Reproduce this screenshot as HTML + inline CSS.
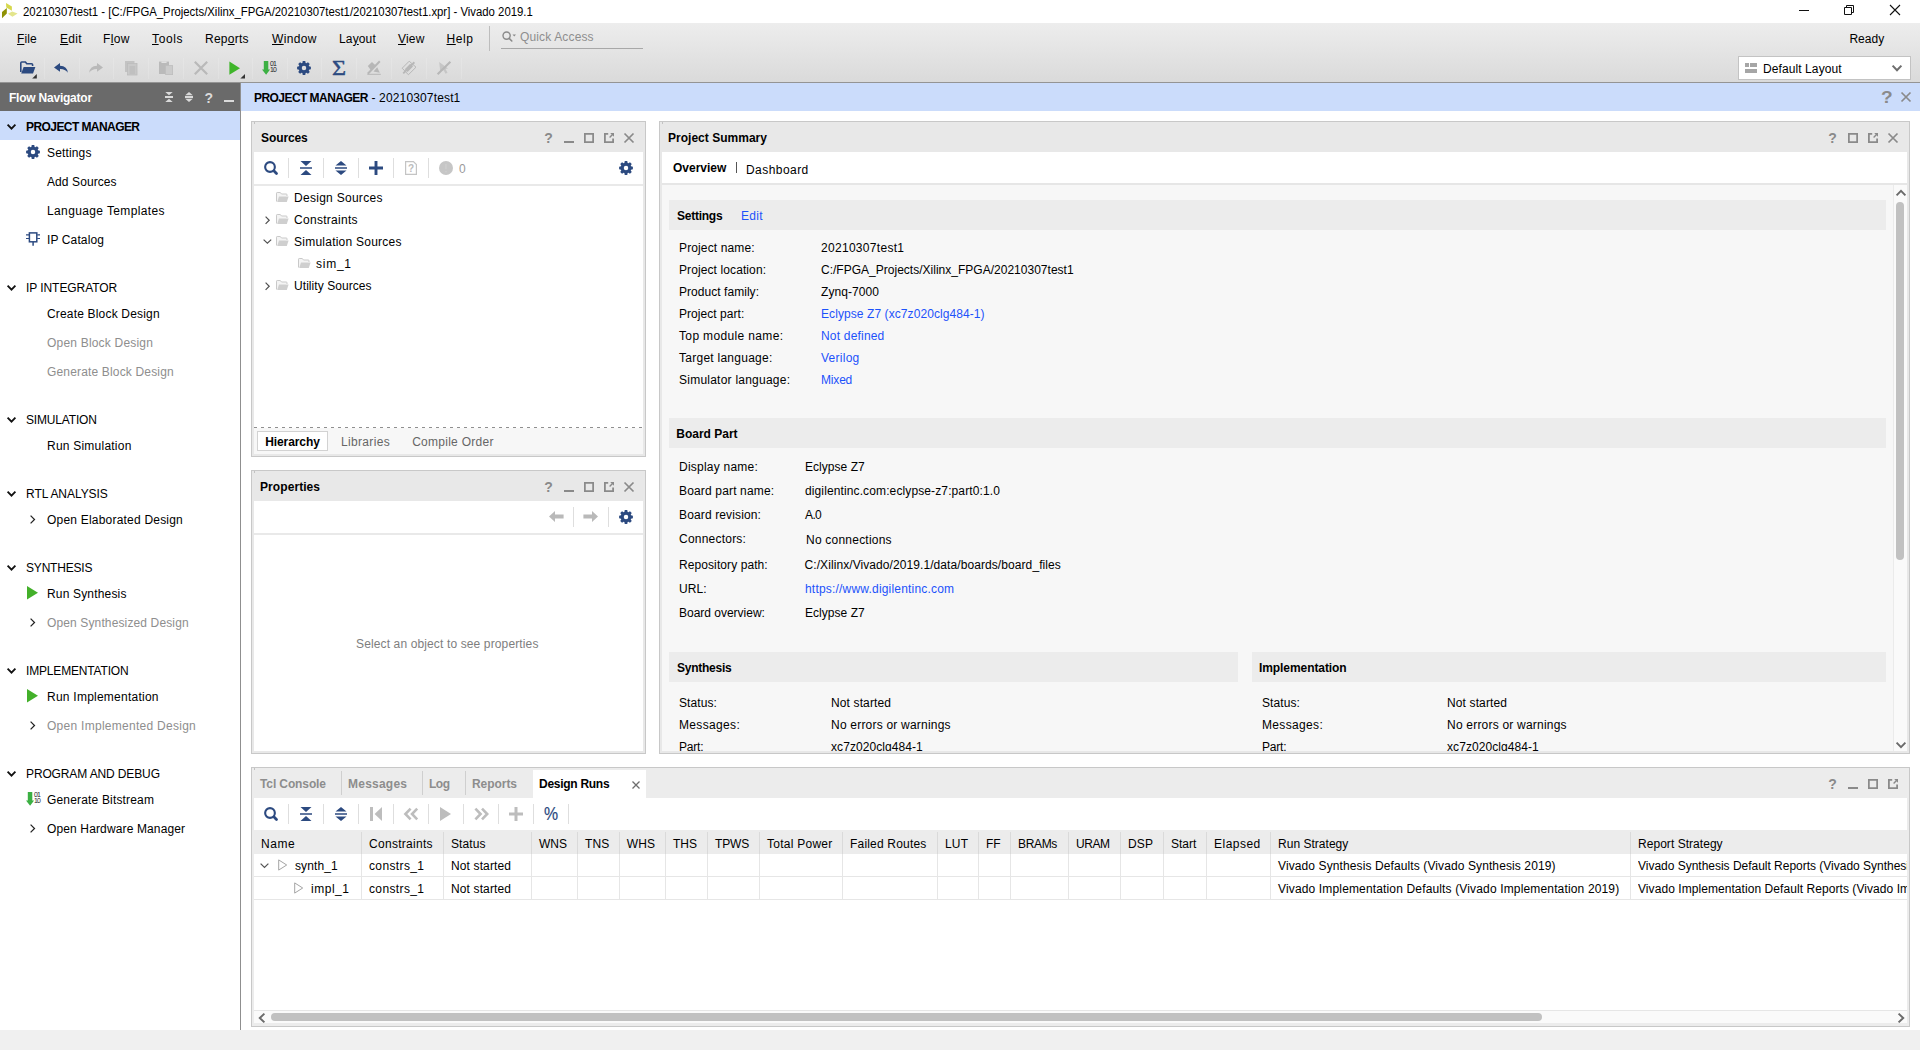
<!DOCTYPE html>
<html lang="en">
<head>
<meta charset="utf-8">
<title>20210307test1 - Vivado 2019.1</title>
<style>
*{box-sizing:border-box;margin:0;padding:0}
html,body{width:1920px;height:1050px;overflow:hidden;background:#fff}
body{font-family:"Liberation Sans",sans-serif;font-size:12px;color:#000;position:relative;line-height:14px}
.a{position:absolute}
.t{position:absolute;white-space:nowrap;height:14px;line-height:14px}
.b{font-weight:bold}
.g{color:#8c8c8c}
.l{color:#2a62d9}
svg{position:absolute;overflow:visible}
u{text-decoration:underline;text-underline-offset:1px}
/* title */
#title{left:0;top:0;width:1920px;height:23px;background:#fff}
#menubar{left:0;top:23px;width:1920px;height:59px;background:linear-gradient(#ededed,#dadada)}
#menuline{left:0;top:82px;width:1920px;height:1px;background:#949494}
/* nav */
#navhdr{left:0;top:83px;width:240px;height:28px;background:#6a6a6a}
#navsel{left:0;top:111px;width:240px;height:29px;background:#cbdcfb}
#navborder{left:240px;top:83px;width:1px;height:947px;background:#8f8f8f}
#status{left:0;top:1030px;width:1920px;height:20px;background:#f0f0f0}
#pmhdr{left:241px;top:83px;width:1679px;height:28px;background:#cbdcfb}
.panel{position:absolute;border:1px solid #c6c6c6;background:#e8e8e8}
.white{position:absolute;background:#fff}
.vsep{position:absolute;width:1px;background:#dcdcdc}
</style>
</head>
<body>
<!-- TITLE BAR -->
<div id="title" class="a"></div>
<!-- MENUBAR -->
<div id="menubar" class="a"></div>
<div id="menuline" class="a"></div>
<!-- NAV -->
<div id="navhdr" class="a"></div>
<div id="navsel" class="a"></div>
<div id="navborder" class="a"></div>
<div id="pmhdr" class="a"></div>
<div id="status" class="a"></div>

<!-- p1_top -->
<svg style="left:0px;top:0px" width="20" height="22" viewBox="0 0 20 22"><path d="M6 2.9L11.9 6.5V10.8L6.3 7.6Z" fill="#d6d84c"/><path d="M2 12L6.8 8V13.6L2 18.2Z" fill="#8f9205"/><path d="M8 13.8L12.2 11.4L17.6 13.6L12.4 16.7Z" fill="#e3e58c"/></svg>
<div class="t" style="left:23px;top:5px;color:#000;transform:scaleX(0.9462);transform-origin:0 0">20210307test1 - [C:/FPGA_Projects/Xilinx_FPGA/20210307test1/20210307test1.xpr] - Vivado 2019.1</div>
<div class="a" style="left:1799px;top:10px;width:10px;height:1px;background:#111"></div>
<svg style="left:1844px;top:5px" width="10" height="10" viewBox="0 0 10 10"><path d="M0.5 2.5H7.5V9.5H0.5Z" fill="none" stroke="#111" stroke-width="1"/><path d="M2.5 2.5V0.5H9.5V7.5H7.5" fill="none" stroke="#111" stroke-width="1"/></svg>
<svg style="left:1890px;top:5px" width="10" height="10" viewBox="0 0 10 10"><path d="M0 0L10 10M10 0L0 10" stroke="#111" stroke-width="1.1" fill="none"/></svg>
<div class="t" style="left:17px;top:32px;letter-spacing:0.085px"><u>F</u>ile</div>
<div class="t" style="left:60px;top:32px;letter-spacing:0.304px"><u>E</u>dit</div>
<div class="t" style="left:103px;top:32px;letter-spacing:0.385px">F<u>l</u>ow</div>
<div class="t" style="left:152px;top:32px;letter-spacing:0.646px"><u>T</u>ools</div>
<div class="t" style="left:205px;top:32px;letter-spacing:0.245px">Rep<u>o</u>rts</div>
<div class="t" style="left:272px;top:32px;letter-spacing:0.322px"><u>W</u>indow</div>
<div class="t" style="left:339px;top:32px;letter-spacing:0.134px">La<u>y</u>out</div>
<div class="t" style="left:398px;top:32px;letter-spacing:0.168px"><u>V</u>iew</div>
<div class="t" style="left:446.5px;top:32px;letter-spacing:0.604px"><u>H</u>elp</div>
<div class="a" style="left:489px;top:26px;width:1px;height:25px;background:#bdbdbd"></div>
<svg style="left:502px;top:31px" width="16" height="12" viewBox="0 0 16 12"><circle cx="4.6" cy="4.6" r="3.6" fill="none" stroke="#8a8a8a" stroke-width="1.4"/><path d="M7.2 7.4L9.8 10" stroke="#8a8a8a" stroke-width="1.6" stroke-linecap="round"/><path d="M10.5 3.6H14L12.25 5.6Z" fill="#8a8a8a"/></svg>
<div class="t" style="left:520px;top:30px;letter-spacing:0.143px;color:#8e8e8e">Quick Access</div>
<div class="a" style="left:501px;top:48px;width:142px;height:1px;background:#a8a8a8"></div>
<div class="t" style="left:1849.4px;top:32px;letter-spacing:0.053px">Ready</div>
<div class="a" style="left:44px;top:58px;width:1px;height:21px;background:rgba(255,255,255,0.16)"></div>
<div class="a" style="left:79px;top:58px;width:1px;height:21px;background:rgba(255,255,255,0.16)"></div>
<div class="a" style="left:113px;top:58px;width:1px;height:21px;background:rgba(255,255,255,0.16)"></div>
<div class="a" style="left:148px;top:58px;width:1px;height:21px;background:rgba(255,255,255,0.16)"></div>
<div class="a" style="left:183px;top:58px;width:1px;height:21px;background:rgba(255,255,255,0.16)"></div>
<div class="a" style="left:218px;top:58px;width:1px;height:21px;background:rgba(255,255,255,0.16)"></div>
<div class="a" style="left:252px;top:58px;width:1px;height:21px;background:rgba(255,255,255,0.16)"></div>
<div class="a" style="left:287px;top:58px;width:1px;height:21px;background:rgba(255,255,255,0.16)"></div>
<div class="a" style="left:321px;top:58px;width:1px;height:21px;background:rgba(255,255,255,0.16)"></div>
<div class="a" style="left:356px;top:58px;width:1px;height:21px;background:rgba(255,255,255,0.16)"></div>
<div class="a" style="left:391px;top:58px;width:1px;height:21px;background:rgba(255,255,255,0.16)"></div>
<div class="a" style="left:426px;top:58px;width:1px;height:21px;background:rgba(255,255,255,0.16)"></div>
<div class="a" style="left:461px;top:58px;width:1px;height:21px;background:rgba(255,255,255,0.16)"></div>
<svg style="left:20px;top:61px" width="17" height="16" viewBox="0 0 17 16"><path d="M0.8 11V2Q0.8 1 1.8 1H5.4L6.8 2.8H11.6Q12.6 2.8 12.6 3.8V5" fill="none" stroke="#2c4a80" stroke-width="1.6"/><path d="M1.2 12.4L3.6 6H15.4L13 12.4Z" fill="#2c4a80"/><path d="M16.8 13V17.6H12.2Z" fill="#333"/></svg>
<svg style="left:54px;top:63px" width="15" height="11" viewBox="0 0 15 11"><path d="M6 0L0 4.4L6 8.8V6.1Q11 5.9 13.8 9.8Q13.4 3 6 2.7Z" fill="#2c4a80"/></svg>
<svg style="left:88px;top:63px" width="15" height="11" viewBox="0 0 15 11"><path d="M9 0L15 4.4L9 8.8V6.1Q4 5.9 1.2 9.8Q1.6 3 9 2.7Z" fill="#b9b9b9"/></svg>
<svg style="left:125px;top:61px" width="12" height="14" viewBox="0 0 12 14"><rect x="0" y="0" width="9.5" height="11" fill="#c3c3c3"/><rect x="2.5" y="2.5" width="9.5" height="11.5" fill="#c9c9c9" stroke="#bcbcbc" stroke-width="0.8"/><path d="M4.4 6H10.2M4.4 8H10.2M4.4 10H10.2M4.4 12H10.2" stroke="#b4b4b4" stroke-width="0.8"/></svg>
<svg style="left:159px;top:61px" width="14" height="14" viewBox="0 0 14 14"><rect x="0" y="0.6" width="10" height="12.4" fill="#bababa"/><rect x="2.4" y="0.6" width="5.2" height="1.3" fill="#e6e6e6"/><rect x="6.6" y="4.6" width="7" height="9" fill="#cbcbcb" stroke="#bdbdbd" stroke-width="0.8"/></svg>
<svg style="left:194px;top:61px" width="14" height="14" viewBox="0 0 14 14"><path d="M0.8 0.8L13.2 13.2M13.2 0.8L0.8 13.2" stroke="#b9b9b9" stroke-width="2.2" fill="none"/></svg>
<svg style="left:229px;top:61px" width="17" height="18" viewBox="0 0 17 18"><path d="M0.4 0.6L11 7.2L0.4 13.8Z" fill="#3fb52a"/><path d="M16 13V17.6H11.4Z" fill="#333"/></svg>
<svg style="left:262px;top:61px" width="16" height="14" viewBox="0 0 16 14"><path d="M1.8 0H6.3V8.4H8.1L4.1 13.8L0 8.4H1.8Z" fill="#3cb043"/><text x="8" y="4.9" font-family="Liberation Sans,sans-serif" font-size="6.9" fill="#1c1c1c" letter-spacing="-0.75">01</text><text x="8" y="11.1" font-family="Liberation Sans,sans-serif" font-size="6.9" fill="#1c1c1c" letter-spacing="-0.75">10</text></svg>
<svg style="left:297px;top:61px" width="14" height="14" viewBox="-7 -7 14 14"><path d="M5.06 -1.64L6.89 -1.26L6.89 1.26L5.06 1.64L4.74 2.42L5.76 3.98L3.98 5.76L2.42 4.74L1.64 5.06L1.26 6.89L-1.26 6.89L-1.64 5.06L-2.42 4.74L-3.98 5.76L-5.76 3.98L-4.74 2.42L-5.06 1.64L-6.89 1.26L-6.89 -1.26L-5.06 -1.64L-4.74 -2.42L-5.76 -3.98L-3.98 -5.76L-2.42 -4.74L-1.64 -5.06L-1.26 -6.89L1.26 -6.89L1.64 -5.06L2.42 -4.74L3.98 -5.76L5.76 -3.98L4.74 -2.42ZM2.25 0A2.25 2.25 0 1 0 -2.25 0A2.25 2.25 0 1 0 2.25 0Z" fill="#2c4a80" fill-rule="evenodd"/></svg>
<div class="t" style="left:332px;top:56px;height:24px;line-height:24px;font-family:'Liberation Serif',serif;font-size:21.5px;color:#2c4a80;-webkit-text-stroke:0.45px #2c4a80;transform:scaleX(1.12);transform-origin:0 0">Σ</div>
<svg style="left:366px;top:60px" width="16" height="16" viewBox="0 0 16 16"><path d="M1.8 5.9L6 2L9.6 5.6L5 10.6Z" fill="#b7b7b7"/><path d="M13.8 1.2L1.8 13.7" stroke="#b7b7b7" stroke-width="2"/><path d="M11.2 7.2L13.8 12.7L7.5 11.6Z" fill="#b7b7b7"/><path d="M1.3 14.3H14.8" stroke="#b7b7b7" stroke-width="1"/></svg>
<svg style="left:401px;top:60px" width="16" height="16" viewBox="0 0 16 16"><path d="M1.2 8.2L8.2 1.2L15 7.2L7.4 14.75Z" fill="none" stroke="#b7b7b7" stroke-width="1"/><path d="M13.4 2.25L2.2 13.4" stroke="#b7b7b7" stroke-width="1.8"/><path d="M10.6 5.2L5.2 10.6" stroke="#b7b7b7" stroke-width="4"/></svg>
<svg style="left:436px;top:60px" width="16" height="16" viewBox="0 0 16 16"><path d="M3.2 2L12 8.5L9.6 9L11.5 12.7L9.5 13.7L7.6 10.2L4.2 11.6Z" fill="#c6c6c6"/><path d="M14.4 1.7L1.6 14.2" stroke="#b7b7b7" stroke-width="2.1"/></svg>
<div class="a" style="left:1738px;top:56px;width:173px;height:24px;background:#fff;border:1px solid #c3c3c3"></div>
<div class="a" style="left:1745px;top:63px;width:3.5px;height:4px;background:#a6a6a6"></div>
<div class="a" style="left:1750px;top:63px;width:7px;height:4px;background:#a6a6a6"></div>
<div class="a" style="left:1745px;top:69px;width:12px;height:4px;background:#a6a6a6"></div>
<div class="t" style="left:1763px;top:62px;letter-spacing:0.093px">Default Layout</div>
<svg style="left:1892.0px;top:65.0px" width="10" height="6" viewBox="0 0 10 6"><path d="M0.6 0.6L5.0 5.2L9.4 0.6" fill="none" stroke="#6e6e6e" stroke-width="2"/></svg>
<!-- p2_nav -->
<div class="t b" style="left:9px;top:91px;letter-spacing:-0.224px;color:#fff">Flow Navigator</div>
<svg style="left:165px;top:92px" width="8" height="10" viewBox="0 0 8 10"><path d="M0.3 0H7.7L4 3.2Z M0 4.1H8V5.9H0Z M4 6.8L7.7 10H0.3Z" fill="#dadada"/></svg>
<svg style="left:185px;top:92px" width="8" height="10" viewBox="0 0 8 10"><path d="M4 0L7.8 3.3H0.2Z M0 4.1H8V5.9H0Z M0.2 6.7H7.8L4 10Z" fill="#dadada"/></svg>
<div class="t b" style="left:204.5px;top:91px;color:#dadada;font-size:14px">?</div>
<div class="a" style="left:224px;top:100px;width:10px;height:2px;background:#dadada"></div>
<svg style="left:7.0px;top:123.75px" width="9" height="5.5" viewBox="0 0 9 5.5"><path d="M0.6 0.6L4.5 4.7L8.4 0.6" fill="none" stroke="#111" stroke-width="1.8"/></svg>
<div class="t b" style="left:26px;top:120px;letter-spacing:-0.573px">PROJECT MANAGER</div>
<svg style="left:26px;top:145px" width="14" height="14" viewBox="-7 -7 14 14"><path d="M5.06 -1.64L6.89 -1.26L6.89 1.26L5.06 1.64L4.74 2.42L5.76 3.98L3.98 5.76L2.42 4.74L1.64 5.06L1.26 6.89L-1.26 6.89L-1.64 5.06L-2.42 4.74L-3.98 5.76L-5.76 3.98L-4.74 2.42L-5.06 1.64L-6.89 1.26L-6.89 -1.26L-5.06 -1.64L-4.74 -2.42L-5.76 -3.98L-3.98 -5.76L-2.42 -4.74L-1.64 -5.06L-1.26 -6.89L1.26 -6.89L1.64 -5.06L2.42 -4.74L3.98 -5.76L5.76 -3.98L4.74 -2.42ZM2.25 0A2.25 2.25 0 1 0 -2.25 0A2.25 2.25 0 1 0 2.25 0Z" fill="#2c4a80" fill-rule="evenodd"/></svg>
<div class="t" style="left:47px;top:146px;letter-spacing:0.149px">Settings</div>
<div class="t" style="left:47px;top:175px;letter-spacing:0.088px">Add Sources</div>
<div class="t" style="left:47px;top:204px;letter-spacing:0.376px">Language Templates</div>
<svg style="left:26px;top:232px" width="14" height="14" viewBox="0 0 14 14"><rect x="3.4" y="0.9" width="7.4" height="8.9" fill="none" stroke="#2c4a80" stroke-width="1.5"/><path d="M0 2.9H3M0 6.5H3M11.2 2.9H14M11.2 6.5H14" stroke="#2c4a80" stroke-width="1.2"/><path d="M7.1 10V13.8" stroke="#2c4a80" stroke-width="1.5"/></svg>
<div class="t" style="left:47px;top:233px;letter-spacing:0.119px">IP Catalog</div>
<svg style="left:7.0px;top:284.75px" width="9" height="5.5" viewBox="0 0 9 5.5"><path d="M0.6 0.6L4.5 4.7L8.4 0.6" fill="none" stroke="#111" stroke-width="1.8"/></svg>
<div class="t" style="left:26px;top:281px;letter-spacing:-0.068px">IP INTEGRATOR</div>
<div class="t" style="left:47px;top:307px;letter-spacing:0.178px">Create Block Design</div>
<div class="t" style="left:47px;top:336px;letter-spacing:0.198px;color:#8e8e8e">Open Block Design</div>
<div class="t" style="left:47px;top:365px;letter-spacing:0.165px;color:#8e8e8e">Generate Block Design</div>
<svg style="left:7.0px;top:416.75px" width="9" height="5.5" viewBox="0 0 9 5.5"><path d="M0.6 0.6L4.5 4.7L8.4 0.6" fill="none" stroke="#111" stroke-width="1.8"/></svg>
<div class="t" style="left:26px;top:413px;letter-spacing:-0.173px">SIMULATION</div>
<div class="t" style="left:47px;top:439px;letter-spacing:0.225px">Run Simulation</div>
<svg style="left:7.0px;top:490.75px" width="9" height="5.5" viewBox="0 0 9 5.5"><path d="M0.6 0.6L4.5 4.7L8.4 0.6" fill="none" stroke="#111" stroke-width="1.8"/></svg>
<div class="t" style="left:26px;top:487px;letter-spacing:-0.062px">RTL ANALYSIS</div>
<svg style="left:29.65px;top:514.8px" width="5.3" height="9" viewBox="0 0 5.3 9"><path d="M0.6 0.6L4.5 4.5L0.6 8.4" fill="none" stroke="#222" stroke-width="1.25"/></svg>
<div class="t" style="left:47px;top:513px;letter-spacing:0.208px">Open Elaborated Design</div>
<svg style="left:7.0px;top:564.75px" width="9" height="5.5" viewBox="0 0 9 5.5"><path d="M0.6 0.6L4.5 4.7L8.4 0.6" fill="none" stroke="#111" stroke-width="1.8"/></svg>
<div class="t" style="left:26px;top:561px;letter-spacing:-0.189px">SYNTHESIS</div>
<svg style="left:27.0px;top:586.3px" width="11" height="13.4" viewBox="0 0 11 13.4"><path d="M0 0L11 6.7L0 13.4Z" fill="#43b02a"/></svg>
<div class="t" style="left:47px;top:587px;letter-spacing:0.169px">Run Synthesis</div>
<svg style="left:29.65px;top:617.8px" width="5.3" height="9" viewBox="0 0 5.3 9"><path d="M0.6 0.6L4.5 4.5L0.6 8.4" fill="none" stroke="#222" stroke-width="1.25"/></svg>
<div class="t" style="left:47px;top:616px;letter-spacing:0.130px;color:#8e8e8e">Open Synthesized Design</div>
<svg style="left:7.0px;top:667.75px" width="9" height="5.5" viewBox="0 0 9 5.5"><path d="M0.6 0.6L4.5 4.7L8.4 0.6" fill="none" stroke="#111" stroke-width="1.8"/></svg>
<div class="t" style="left:26px;top:664px;letter-spacing:-0.170px">IMPLEMENTATION</div>
<svg style="left:27.0px;top:689.3px" width="11" height="13.4" viewBox="0 0 11 13.4"><path d="M0 0L11 6.7L0 13.4Z" fill="#43b02a"/></svg>
<div class="t" style="left:47px;top:690px;letter-spacing:0.242px">Run Implementation</div>
<svg style="left:29.65px;top:720.8px" width="5.3" height="9" viewBox="0 0 5.3 9"><path d="M0.6 0.6L4.5 4.5L0.6 8.4" fill="none" stroke="#222" stroke-width="1.25"/></svg>
<div class="t" style="left:47px;top:719px;letter-spacing:0.275px;color:#8e8e8e">Open Implemented Design</div>
<svg style="left:7.0px;top:770.75px" width="9" height="5.5" viewBox="0 0 9 5.5"><path d="M0.6 0.6L4.5 4.7L8.4 0.6" fill="none" stroke="#111" stroke-width="1.8"/></svg>
<div class="t" style="left:26px;top:767px;letter-spacing:-0.127px">PROGRAM AND DEBUG</div>
<svg style="left:26px;top:792px" width="16" height="14" viewBox="0 0 16 14"><path d="M1.8 0H6.3V8.4H8.1L4.1 13.8L0 8.4H1.8Z" fill="#3cb043"/><text x="8" y="4.9" font-family="Liberation Sans,sans-serif" font-size="6.9" fill="#1c1c1c" letter-spacing="-0.75">01</text><text x="8" y="11.1" font-family="Liberation Sans,sans-serif" font-size="6.9" fill="#1c1c1c" letter-spacing="-0.75">10</text></svg>
<div class="t" style="left:47px;top:793px;letter-spacing:0.168px">Generate Bitstream</div>
<svg style="left:29.65px;top:823.8px" width="5.3" height="9" viewBox="0 0 5.3 9"><path d="M0.6 0.6L4.5 4.5L0.6 8.4" fill="none" stroke="#222" stroke-width="1.25"/></svg>
<div class="t" style="left:47px;top:822px;letter-spacing:0.135px">Open Hardware Manager</div>
<div class="t b" style="left:254px;top:91px;letter-spacing:-0.551px">PROJECT MANAGER</div>
<div class="t" style="left:371.5px;top:91px;letter-spacing:0.146px">- 20210307test1</div>
<div class="t b" style="left:1880.5px;top:89.8px;color:#8a8a8a;font-size:16.5px;line-height:14px;transform:scaleX(1.16);transform-origin:0 0">?</div>
<svg style="left:1901.0px;top:92.0px" width="10" height="10" viewBox="0 0 10 10"><path d="M0.5 0.5L9.5 9.5M9.5 0.5L0.5 9.5" stroke="#8a8a8a" stroke-width="1.7" fill="none"/></svg>
<!-- p3_src -->
<div class="a" style="left:251px;top:121px;width:395px;height:336px;border:1px solid #c8c8c8;background:#e8e8e8"></div><div class="a" style="left:254px;top:152px;width:389px;height:302px;background:#fff"></div>
<div class="a" style="left:254px;top:122px;width:1px;height:2px;background:#c2c2c2"></div>
<div class="t b" style="left:261px;top:131px;letter-spacing:-0.093px">Sources</div>
<div class="t b" style="left:544.0px;top:130.7px;color:#8a8a8a;font-size:14px;width:9px;text-align:center">?</div><div class="a" style="left:563.5px;top:141px;width:10px;height:2px;background:#8a8a8a"></div><svg style="left:584px;top:133px" width="10" height="10" viewBox="0 0 10 10"><rect x="0.88" y="0.88" width="8.24" height="8.24" fill="none" stroke="#8a8a8a" stroke-width="1.75"/></svg><svg style="left:604px;top:133px" width="10" height="10" viewBox="0 0 10 10"><path d="M4.2 0.9H0.9V9.1H9.1V5.6" fill="none" stroke="#8a8a8a" stroke-width="1.8"/><path d="M5.6 4.4L9 1" stroke="#8a8a8a" stroke-width="1.4"/><path d="M6.2 0H10V3.8Z" fill="#8a8a8a"/></svg><svg style="left:624.0px;top:133.0px" width="10" height="10" viewBox="0 0 10 10"><path d="M0.5 0.5L9.5 9.5M9.5 0.5L0.5 9.5" stroke="#8a8a8a" stroke-width="1.75" fill="none"/></svg>
<div class="a" style="left:254px;top:184px;width:389px;height:2px;background:#e9e9e9"></div>
<div class="a" style="left:288px;top:158px;width:1px;height:20px;background:#dedede"></div>
<div class="a" style="left:323px;top:158px;width:1px;height:20px;background:#dedede"></div>
<div class="a" style="left:358px;top:158px;width:1px;height:20px;background:#dedede"></div>
<div class="a" style="left:393px;top:158px;width:1px;height:20px;background:#dedede"></div>
<div class="a" style="left:428px;top:158px;width:1px;height:20px;background:#dedede"></div>
<svg style="left:264px;top:161.0px" width="14" height="14" viewBox="0 0 14 14"><circle cx="6" cy="6" r="4.85" fill="none" stroke="#2c4a80" stroke-width="2.1"/><path d="M10.3 10.3L12.5 12.5" stroke="#2c4a80" stroke-width="2.8" stroke-linecap="round"/></svg>
<svg style="left:300px;top:161px" width="12" height="14" viewBox="0 0 12 14"><path d="M0.5 0L11.5 0L6 5Z M0 6.2H12V7.8H0Z M6 9L11.5 14L0.5 14Z" fill="#2c4a80"/></svg>
<svg style="left:335px;top:161px" width="12" height="14" viewBox="0 0 12 14"><path d="M6 0L11.5 4.6L0.5 4.6Z M0 6.2H12V7.8H0Z M0.5 9.4L11.5 9.4L6 14Z" fill="#2c4a80"/></svg>
<svg style="left:369.0px;top:161.0px" width="14" height="14" viewBox="0 0 14 14"><path d="M0 5.55H14V8.45H0Z M5.55 0H8.45V14H5.55Z" fill="#2c4a80"/></svg>
<svg style="left:405px;top:161px" width="12" height="14" viewBox="0 0 12 14"><path d="M0.6 0.6H8.4L11.4 3.6V13.4H0.6Z" fill="#fff" stroke="#c4c4c4" stroke-width="1.2"/><text x="6" y="11.2" font-size="10" font-weight="bold" font-family="Liberation Sans,sans-serif" fill="#bcbcbc" text-anchor="middle">?</text></svg>
<svg style="left:439px;top:161px" width="14" height="14" viewBox="0 0 14 14"><circle cx="7" cy="7" r="7" fill="#c6c6c6"/><path d="M7 3V8.2" stroke="#cdcdcd" stroke-width="1.6"/><circle cx="7" cy="10.6" r="0.9" fill="#cdcdcd"/></svg>
<div class="t" style="left:459px;top:162px;color:#9a9a9a">0</div>
<svg style="left:619px;top:161px" width="14" height="14" viewBox="-7 -7 14 14"><path d="M5.06 -1.64L6.89 -1.26L6.89 1.26L5.06 1.64L4.74 2.42L5.76 3.98L3.98 5.76L2.42 4.74L1.64 5.06L1.26 6.89L-1.26 6.89L-1.64 5.06L-2.42 4.74L-3.98 5.76L-5.76 3.98L-4.74 2.42L-5.06 1.64L-6.89 1.26L-6.89 -1.26L-5.06 -1.64L-4.74 -2.42L-5.76 -3.98L-3.98 -5.76L-2.42 -4.74L-1.64 -5.06L-1.26 -6.89L1.26 -6.89L1.64 -5.06L2.42 -4.74L3.98 -5.76L5.76 -3.98L4.74 -2.42ZM2.25 0A2.25 2.25 0 1 0 -2.25 0A2.25 2.25 0 1 0 2.25 0Z" fill="#2c4a80" fill-rule="evenodd"/></svg>
<svg style="left:276px;top:192px" width="13" height="11" viewBox="0 0 13 11"><path d="M0.5 9.5V1.2Q0.5 0.5 1.2 0.5H4.3L5.5 2H10.3Q11 2 11 2.8V4" fill="#f4f4f4" stroke="#c9c9c9" stroke-width="1"/><path d="M1.2 10L3 4.5H12.6L10.8 10Z" fill="#cfcfcf"/></svg>
<div class="t" style="left:294px;top:191px;letter-spacing:0.283px">Design Sources</div>
<svg style="left:264.5px;top:215.55px" width="5" height="8.5" viewBox="0 0 5 8.5"><path d="M0.6 0.6L4.2 4.25L0.6 7.9" fill="none" stroke="#505050" stroke-width="1.2"/></svg>
<svg style="left:276px;top:214px" width="13" height="11" viewBox="0 0 13 11"><path d="M0.5 9.5V1.2Q0.5 0.5 1.2 0.5H4.3L5.5 2H10.3Q11 2 11 2.8V4" fill="#f4f4f4" stroke="#c9c9c9" stroke-width="1"/><path d="M1.2 10L3 4.5H12.6L10.8 10Z" fill="#cfcfcf"/></svg>
<div class="t" style="left:294px;top:213px;letter-spacing:0.290px">Constraints</div>
<svg style="left:262.70000000000005px;top:239.3px" width="8.8" height="5" viewBox="0 0 8.8 5"><path d="M0.6 0.6L4.4 4.2L8.200000000000001 0.6" fill="none" stroke="#505050" stroke-width="1.2"/></svg>
<svg style="left:276px;top:236px" width="13" height="11" viewBox="0 0 13 11"><path d="M0.5 9.5V1.2Q0.5 0.5 1.2 0.5H4.3L5.5 2H10.3Q11 2 11 2.8V4" fill="#f4f4f4" stroke="#c9c9c9" stroke-width="1"/><path d="M1.2 10L3 4.5H12.6L10.8 10Z" fill="#cfcfcf"/></svg>
<div class="t" style="left:294px;top:235px;letter-spacing:0.242px">Simulation Sources</div>
<svg style="left:298px;top:258px" width="13" height="11" viewBox="0 0 13 11"><path d="M0.5 9.5V1.2Q0.5 0.5 1.2 0.5H4.3L5.5 2H10.3Q11 2 11 2.8V4" fill="#f4f4f4" stroke="#c9c9c9" stroke-width="1"/><path d="M1.2 10L3 4.5H12.6L10.8 10Z" fill="#cfcfcf"/></svg>
<div class="t" style="left:316px;top:257px;letter-spacing:0.746px">sim_1</div>
<svg style="left:264.5px;top:281.55px" width="5" height="8.5" viewBox="0 0 5 8.5"><path d="M0.6 0.6L4.2 4.25L0.6 7.9" fill="none" stroke="#505050" stroke-width="1.2"/></svg>
<svg style="left:276px;top:280px" width="13" height="11" viewBox="0 0 13 11"><path d="M0.5 9.5V1.2Q0.5 0.5 1.2 0.5H4.3L5.5 2H10.3Q11 2 11 2.8V4" fill="#f4f4f4" stroke="#c9c9c9" stroke-width="1"/><path d="M1.2 10L3 4.5H12.6L10.8 10Z" fill="#cfcfcf"/></svg>
<div class="t" style="left:294px;top:279px;letter-spacing:0.065px">Utility Sources</div>
<div class="a" style="left:254px;top:427px;width:389px;height:1px;background:repeating-linear-gradient(90deg,#8f8f8f 0 3px,transparent 3px 7px)"></div>
<div class="a" style="left:254px;top:428px;width:389px;height:26px;background:#f7f7f7"></div>
<div class="a" style="left:257px;top:431px;width:71px;height:20px;background:#fff;border:1px solid #d2d2d2"></div>
<div class="t b" style="left:265.2px;top:435px;letter-spacing:-0.084px">Hierarchy</div>
<div class="t" style="left:341px;top:435px;letter-spacing:0.334px;color:#666">Libraries</div>
<div class="t" style="left:412.2px;top:435px;letter-spacing:0.264px;color:#666">Compile Order</div>
<div class="a" style="left:251px;top:470px;width:395px;height:284px;border:1px solid #c8c8c8;background:#e8e8e8"></div><div class="a" style="left:254px;top:501px;width:389px;height:250px;background:#fff"></div>
<div class="a" style="left:254px;top:471px;width:1px;height:2px;background:#c2c2c2"></div>
<div class="t b" style="left:260px;top:480px;letter-spacing:0.077px">Properties</div>
<div class="t b" style="left:544.0px;top:479.7px;color:#8a8a8a;font-size:14px;width:9px;text-align:center">?</div><div class="a" style="left:563.5px;top:490px;width:10px;height:2px;background:#8a8a8a"></div><svg style="left:584px;top:482px" width="10" height="10" viewBox="0 0 10 10"><rect x="0.88" y="0.88" width="8.24" height="8.24" fill="none" stroke="#8a8a8a" stroke-width="1.75"/></svg><svg style="left:604px;top:482px" width="10" height="10" viewBox="0 0 10 10"><path d="M4.2 0.9H0.9V9.1H9.1V5.6" fill="none" stroke="#8a8a8a" stroke-width="1.8"/><path d="M5.6 4.4L9 1" stroke="#8a8a8a" stroke-width="1.4"/><path d="M6.2 0H10V3.8Z" fill="#8a8a8a"/></svg><svg style="left:624.0px;top:482.0px" width="10" height="10" viewBox="0 0 10 10"><path d="M0.5 0.5L9.5 9.5M9.5 0.5L0.5 9.5" stroke="#8a8a8a" stroke-width="1.75" fill="none"/></svg>
<div class="a" style="left:254px;top:533px;width:389px;height:2px;background:#e9e9e9"></div>
<div class="a" style="left:573px;top:507px;width:1px;height:20px;background:#dedede"></div>
<div class="a" style="left:608px;top:507px;width:1px;height:20px;background:#dedede"></div>
<svg style="left:549px;top:511px" width="15" height="11" viewBox="0 0 15 11"><path d="M0 5.5L6 0V3.4H14.6V7.6H6V11Z" fill="#b9b9b9"/></svg>
<svg style="left:583px;top:511px" width="15" height="11" viewBox="0 0 15 11"><path d="M15 5.5L9 0V3.4H0.4V7.6H9V11Z" fill="#b9b9b9"/></svg>
<svg style="left:619px;top:510px" width="14" height="14" viewBox="-7 -7 14 14"><path d="M5.06 -1.64L6.89 -1.26L6.89 1.26L5.06 1.64L4.74 2.42L5.76 3.98L3.98 5.76L2.42 4.74L1.64 5.06L1.26 6.89L-1.26 6.89L-1.64 5.06L-2.42 4.74L-3.98 5.76L-5.76 3.98L-4.74 2.42L-5.06 1.64L-6.89 1.26L-6.89 -1.26L-5.06 -1.64L-4.74 -2.42L-5.76 -3.98L-3.98 -5.76L-2.42 -4.74L-1.64 -5.06L-1.26 -6.89L1.26 -6.89L1.64 -5.06L2.42 -4.74L3.98 -5.76L5.76 -3.98L4.74 -2.42ZM2.25 0A2.25 2.25 0 1 0 -2.25 0A2.25 2.25 0 1 0 2.25 0Z" fill="#2c4a80" fill-rule="evenodd"/></svg>
<div class="t" style="left:356px;top:637px;letter-spacing:0.130px;color:#7e7e7e">Select an object to see properties</div>
<!-- p4_sum -->
<div class="a" style="left:659px;top:121px;width:1251px;height:633px;border:1px solid #c8c8c8;background:#e8e8e8"></div><div class="a" style="left:662px;top:152px;width:1245px;height:599px;background:#fff"></div>
<div class="a" style="left:662px;top:122px;width:1px;height:2px;background:#c2c2c2"></div>
<div class="t b" style="left:668px;top:131px;letter-spacing:0.020px">Project Summary</div>
<div class="t b" style="left:1828.0px;top:130.7px;color:#8a8a8a;font-size:14px;width:9px;text-align:center">?</div><svg style="left:1848px;top:133px" width="10" height="10" viewBox="0 0 10 10"><rect x="0.88" y="0.88" width="8.24" height="8.24" fill="none" stroke="#8a8a8a" stroke-width="1.75"/></svg><svg style="left:1868px;top:133px" width="10" height="10" viewBox="0 0 10 10"><path d="M4.2 0.9H0.9V9.1H9.1V5.6" fill="none" stroke="#8a8a8a" stroke-width="1.8"/><path d="M5.6 4.4L9 1" stroke="#8a8a8a" stroke-width="1.4"/><path d="M6.2 0H10V3.8Z" fill="#8a8a8a"/></svg><svg style="left:1888.0px;top:133.0px" width="10" height="10" viewBox="0 0 10 10"><path d="M0.5 0.5L9.5 9.5M9.5 0.5L0.5 9.5" stroke="#8a8a8a" stroke-width="1.75" fill="none"/></svg>
<div class="a" style="left:662px;top:183px;width:1245px;height:2px;background:#e6e6e6"></div>
<div class="a" style="left:662px;top:185px;width:1245px;height:566px;background:#f7f7f7"></div>
<div class="t b" style="left:673px;top:161px;letter-spacing:-0.011px">Overview</div>
<div class="a" style="left:736px;top:162px;width:1px;height:11px;background:#555"></div>
<div class="t" style="left:746px;top:163px;letter-spacing:0.448px">Dashboard</div>
<div class="a" style="left:1893px;top:185px;width:1px;height:566px;background:#ebebeb"></div>
<div class="a" style="left:1894px;top:185px;width:13px;height:566px;background:#fafafa"></div>
<svg style="left:1896.0px;top:190.0px" width="10" height="6" viewBox="0 0 10 6"><path d="M0.6 5.4L5.0 0.8L9.4 5.4" fill="none" stroke="#6a6a6a" stroke-width="1.9"/></svg>
<div class="a" style="left:1896px;top:202px;width:8px;height:358px;border-radius:4px;background:#c1c1c1"></div>
<svg style="left:1896.0px;top:742.0px" width="10" height="6" viewBox="0 0 10 6"><path d="M0.6 0.6L5.0 5.2L9.4 0.6" fill="none" stroke="#6a6a6a" stroke-width="1.9"/></svg>
<div class="a" style="left:669px;top:200px;width:1217px;height:30px;background:#ececec"></div>
<div class="t b" style="left:677px;top:209px;letter-spacing:-0.249px">Settings</div>
<div class="t" style="left:741px;top:209px;letter-spacing:0.304px;color:#1c52fb">Edit</div>
<div class="t" style="left:679px;top:241px;letter-spacing:0.129px">Project name:</div>
<div class="t" style="left:821px;top:241px;letter-spacing:0.299px">20210307test1</div>
<div class="t" style="left:679px;top:263px;letter-spacing:0.101px">Project location:</div>
<div class="t" style="left:821px;top:263px;letter-spacing:0.012px">C:/FPGA_Projects/Xilinx_FPGA/20210307test1</div>
<div class="t" style="left:679px;top:285px;letter-spacing:0.046px">Product family:</div>
<div class="t" style="left:821px;top:285px;letter-spacing:0.078px">Zynq-7000</div>
<div class="t" style="left:679px;top:307px;letter-spacing:0.050px">Project part:</div>
<div class="t" style="left:821px;top:307px;letter-spacing:0.081px;color:#1c52fb">Eclypse Z7 (xc7z020clg484-1)</div>
<div class="t" style="left:679px;top:329px;letter-spacing:0.351px">Top module name:</div>
<div class="t" style="left:821px;top:329px;letter-spacing:0.191px;color:#1c52fb">Not defined</div>
<div class="t" style="left:679px;top:351px;letter-spacing:0.260px">Target language:</div>
<div class="t" style="left:821px;top:351px;letter-spacing:0.266px;color:#1c52fb">Verilog</div>
<div class="t" style="left:679px;top:373px;letter-spacing:0.237px">Simulator language:</div>
<div class="t" style="left:821px;top:373px;letter-spacing:-0.179px;color:#1c52fb">Mixed</div>
<div class="a" style="left:669px;top:418px;width:1217px;height:30px;background:#ececec"></div>
<div class="t b" style="left:676.3px;top:427px;letter-spacing:-0.007px">Board Part</div>
<div class="t" style="left:679px;top:460px;letter-spacing:0.231px">Display name:</div>
<div class="t" style="left:805px;top:460px;letter-spacing:0.038px">Eclypse Z7</div>
<div class="t" style="left:679px;top:484px;letter-spacing:0.159px">Board part name:</div>
<div class="t" style="left:805px;top:484px;letter-spacing:0.118px">digilentinc.com:eclypse-z7:part0:1.0</div>
<div class="t" style="left:679px;top:508px;letter-spacing:0.132px">Board revision:</div>
<div class="t" style="left:805px;top:508px;letter-spacing:-0.608px">A.0</div>
<div class="t" style="left:679px;top:532px;letter-spacing:0.220px">Connectors:</div>
<div class="t" style="left:679px;top:558px;letter-spacing:0.087px">Repository path:</div>
<div class="t" style="left:804.5px;top:558px;letter-spacing:0.080px">C:/Xilinx/Vivado/2019.1/data/boards/board_files</div>
<div class="t" style="left:679px;top:582px;letter-spacing:0.119px">URL:</div>
<div class="t" style="left:805px;top:582px;letter-spacing:0.194px;color:#1c52fb">https://www.digilentinc.com</div>
<div class="t" style="left:679px;top:606px;letter-spacing:-0.010px">Board overview:</div>
<div class="t" style="left:805px;top:606px;letter-spacing:0.038px">Eclypse Z7</div>
<div class="t" style="left:806px;top:533px;letter-spacing:0.222px">No connections</div>
<div class="a" style="left:669px;top:652px;width:569px;height:30px;background:#ececec"></div>
<div class="t b" style="left:677px;top:661px;letter-spacing:-0.250px">Synthesis</div>
<div class="a" style="left:1252px;top:652px;width:634px;height:30px;background:#ececec"></div>
<div class="t b" style="left:1259px;top:661px;letter-spacing:-0.076px">Implementation</div>
<div class="a" style="left:662px;top:690px;width:1230px;height:61px;overflow:hidden">
<div class="t" style="left:17px;top:6px;letter-spacing:0.090px">Status:</div>
<div class="t" style="left:169px;top:6px;letter-spacing:0.130px">Not started</div>
<div class="t" style="left:600px;top:6px;letter-spacing:0.090px">Status:</div>
<div class="t" style="left:785px;top:6px;letter-spacing:0.130px">Not started</div>
<div class="t" style="left:17px;top:28px;letter-spacing:0.346px">Messages:</div>
<div class="t" style="left:169px;top:28px;letter-spacing:0.211px">No errors or warnings</div>
<div class="t" style="left:600px;top:28px;letter-spacing:0.346px">Messages:</div>
<div class="t" style="left:785px;top:28px;letter-spacing:0.211px">No errors or warnings</div>
<div class="t" style="left:17px;top:50px;letter-spacing:-0.211px">Part:</div>
<div class="t" style="left:169px;top:50px;letter-spacing:0.076px">xc7z020clg484-1</div>
<div class="t" style="left:600px;top:50px;letter-spacing:-0.211px">Part:</div>
<div class="t" style="left:785px;top:50px;letter-spacing:0.076px">xc7z020clg484-1</div>
</div>
<!-- p5_bot -->
<div class="a" style="left:251px;top:767px;width:1659px;height:260px;border:1px solid #c8c8c8;background:#ececec"></div>
<div class="a" style="left:254px;top:798px;width:1653px;height:225px;background:#fff"></div>
<div class="a" style="left:254px;top:768px;width:1px;height:2px;background:#c2c2c2"></div>
<div class="t b" style="left:260px;top:777px;letter-spacing:-0.113px;color:#8d8d8d">Tcl Console</div>
<div class="t b" style="left:348px;top:777px;letter-spacing:0.232px;color:#8d8d8d">Messages</div>
<div class="t b" style="left:429px;top:777px;letter-spacing:-0.500px;color:#8d8d8d">Log</div>
<div class="t b" style="left:472px;top:777px;letter-spacing:-0.057px;color:#8d8d8d">Reports</div>
<div class="a" style="left:341px;top:771px;width:1px;height:24px;background:#cfcfcf"></div>
<div class="a" style="left:422px;top:771px;width:1px;height:24px;background:#cfcfcf"></div>
<div class="a" style="left:465px;top:771px;width:1px;height:24px;background:#cfcfcf"></div>
<div class="a" style="left:533px;top:770px;width:113px;height:28px;background:#fff"></div>
<div class="t b" style="left:539px;top:777px;letter-spacing:-0.274px">Design Runs</div>
<svg style="left:632.0px;top:781.0px" width="8" height="8" viewBox="0 0 8 8"><path d="M0.5 0.5L7.5 7.5M7.5 0.5L0.5 7.5" stroke="#6e6e6e" stroke-width="1.3" fill="none"/></svg>
<div class="t b" style="left:1828.0px;top:776.7px;color:#8a8a8a;font-size:14px;width:9px;text-align:center">?</div><div class="a" style="left:1848px;top:787px;width:10px;height:2px;background:#8a8a8a"></div><svg style="left:1868px;top:779px" width="10" height="10" viewBox="0 0 10 10"><rect x="0.88" y="0.88" width="8.24" height="8.24" fill="none" stroke="#8a8a8a" stroke-width="1.75"/></svg><svg style="left:1888px;top:779px" width="10" height="10" viewBox="0 0 10 10"><path d="M4.2 0.9H0.9V9.1H9.1V5.6" fill="none" stroke="#8a8a8a" stroke-width="1.8"/><path d="M5.6 4.4L9 1" stroke="#8a8a8a" stroke-width="1.4"/><path d="M6.2 0H10V3.8Z" fill="#8a8a8a"/></svg>
<div class="a" style="left:288px;top:804px;width:1px;height:20px;background:#dedede"></div>
<div class="a" style="left:323px;top:804px;width:1px;height:20px;background:#dedede"></div>
<div class="a" style="left:358px;top:804px;width:1px;height:20px;background:#dedede"></div>
<div class="a" style="left:393px;top:804px;width:1px;height:20px;background:#dedede"></div>
<div class="a" style="left:428px;top:804px;width:1px;height:20px;background:#dedede"></div>
<div class="a" style="left:463px;top:804px;width:1px;height:20px;background:#dedede"></div>
<div class="a" style="left:498px;top:804px;width:1px;height:20px;background:#dedede"></div>
<div class="a" style="left:533px;top:804px;width:1px;height:20px;background:#dedede"></div>
<div class="a" style="left:568px;top:804px;width:1px;height:20px;background:#dedede"></div>
<svg style="left:264px;top:807.0px" width="14" height="14" viewBox="0 0 14 14"><circle cx="6" cy="6" r="4.85" fill="none" stroke="#2c4a80" stroke-width="2.1"/><path d="M10.3 10.3L12.5 12.5" stroke="#2c4a80" stroke-width="2.8" stroke-linecap="round"/></svg>
<svg style="left:300px;top:807px" width="12" height="14" viewBox="0 0 12 14"><path d="M0.5 0L11.5 0L6 5Z M0 6.2H12V7.8H0Z M6 9L11.5 14L0.5 14Z" fill="#2c4a80"/></svg>
<svg style="left:335px;top:807px" width="12" height="14" viewBox="0 0 12 14"><path d="M6 0L11.5 4.6L0.5 4.6Z M0 6.2H12V7.8H0Z M0.5 9.4L11.5 9.4L6 14Z" fill="#2c4a80"/></svg>
<svg style="left:370px;top:807px" width="12" height="14" viewBox="0 0 12 14"><rect x="0" y="0" width="3" height="14" fill="#bdbdbd"/><path d="M12 0V14L4.6 7Z" fill="#bdbdbd"/></svg>
<svg style="left:404px;top:808px" width="15" height="12" viewBox="0 0 15 12"><path d="M6.6 0.6L1.4 6L6.6 11.4M13.2 0.6L8 6L13.2 11.4" fill="none" stroke="#bdbdbd" stroke-width="2.6"/></svg>
<svg style="left:440px;top:807px" width="11" height="14" viewBox="0 0 11 14"><path d="M0 0L11 7L0 14Z" fill="#bdbdbd"/></svg>
<svg style="left:474px;top:808px" width="15" height="12" viewBox="0 0 15 12"><path d="M1.4 0.6L6.6 6L1.4 11.4M8 0.6L13.2 6L8 11.4" fill="none" stroke="#bdbdbd" stroke-width="2.6"/></svg>
<svg style="left:509.0px;top:807.0px" width="14" height="14" viewBox="0 0 14 14"><path d="M0 5.5H14V8.5H0Z M5.5 0H8.5V14H5.5Z" fill="#bdbdbd"/></svg>
<div class="t" style="left:543.5px;top:803px;height:22px;line-height:22px;font-size:18px;color:#2c4a80;-webkit-text-stroke:0.2px #2c4a80;transform:scaleX(0.88);transform-origin:0 0">%</div>
<div class="a" style="left:254px;top:830px;width:1653px;height:24px;background:#ececec"></div>
<div class="a" style="left:361px;top:832px;width:1px;height:22px;background:#dadada"></div>
<div class="a" style="left:361px;top:854px;width:1px;height:46px;background:#e6e6e6"></div>
<div class="a" style="left:443px;top:832px;width:1px;height:22px;background:#dadada"></div>
<div class="a" style="left:443px;top:854px;width:1px;height:46px;background:#e6e6e6"></div>
<div class="a" style="left:531px;top:832px;width:1px;height:22px;background:#dadada"></div>
<div class="a" style="left:531px;top:854px;width:1px;height:46px;background:#e6e6e6"></div>
<div class="a" style="left:577px;top:832px;width:1px;height:22px;background:#dadada"></div>
<div class="a" style="left:577px;top:854px;width:1px;height:46px;background:#e6e6e6"></div>
<div class="a" style="left:619px;top:832px;width:1px;height:22px;background:#dadada"></div>
<div class="a" style="left:619px;top:854px;width:1px;height:46px;background:#e6e6e6"></div>
<div class="a" style="left:665px;top:832px;width:1px;height:22px;background:#dadada"></div>
<div class="a" style="left:665px;top:854px;width:1px;height:46px;background:#e6e6e6"></div>
<div class="a" style="left:707px;top:832px;width:1px;height:22px;background:#dadada"></div>
<div class="a" style="left:707px;top:854px;width:1px;height:46px;background:#e6e6e6"></div>
<div class="a" style="left:759px;top:832px;width:1px;height:22px;background:#dadada"></div>
<div class="a" style="left:759px;top:854px;width:1px;height:46px;background:#e6e6e6"></div>
<div class="a" style="left:842px;top:832px;width:1px;height:22px;background:#dadada"></div>
<div class="a" style="left:842px;top:854px;width:1px;height:46px;background:#e6e6e6"></div>
<div class="a" style="left:937px;top:832px;width:1px;height:22px;background:#dadada"></div>
<div class="a" style="left:937px;top:854px;width:1px;height:46px;background:#e6e6e6"></div>
<div class="a" style="left:978px;top:832px;width:1px;height:22px;background:#dadada"></div>
<div class="a" style="left:978px;top:854px;width:1px;height:46px;background:#e6e6e6"></div>
<div class="a" style="left:1010px;top:832px;width:1px;height:22px;background:#dadada"></div>
<div class="a" style="left:1010px;top:854px;width:1px;height:46px;background:#e6e6e6"></div>
<div class="a" style="left:1068px;top:832px;width:1px;height:22px;background:#dadada"></div>
<div class="a" style="left:1068px;top:854px;width:1px;height:46px;background:#e6e6e6"></div>
<div class="a" style="left:1120px;top:832px;width:1px;height:22px;background:#dadada"></div>
<div class="a" style="left:1120px;top:854px;width:1px;height:46px;background:#e6e6e6"></div>
<div class="a" style="left:1163px;top:832px;width:1px;height:22px;background:#dadada"></div>
<div class="a" style="left:1163px;top:854px;width:1px;height:46px;background:#e6e6e6"></div>
<div class="a" style="left:1206px;top:832px;width:1px;height:22px;background:#dadada"></div>
<div class="a" style="left:1206px;top:854px;width:1px;height:46px;background:#e6e6e6"></div>
<div class="a" style="left:1270px;top:832px;width:1px;height:22px;background:#dadada"></div>
<div class="a" style="left:1270px;top:854px;width:1px;height:46px;background:#e6e6e6"></div>
<div class="a" style="left:1630px;top:832px;width:1px;height:22px;background:#dadada"></div>
<div class="a" style="left:1630px;top:854px;width:1px;height:46px;background:#e6e6e6"></div>
<div class="a" style="left:254px;top:876px;width:1653px;height:1px;background:#e6e6e6"></div>
<div class="a" style="left:254px;top:899px;width:1653px;height:1px;background:#e6e6e6"></div>
<div class="t" style="left:261px;top:837px;letter-spacing:0.528px">Name</div>
<div class="t" style="left:369px;top:837px;letter-spacing:0.290px">Constraints</div>
<div class="t" style="left:451px;top:837px;letter-spacing:0.114px">Status</div>
<div class="t" style="left:539px;top:837px;letter-spacing:0.000px">WNS</div>
<div class="t" style="left:585px;top:837px;letter-spacing:0.150px">TNS</div>
<div class="t" style="left:626.7px;top:837px;letter-spacing:0.150px">WHS</div>
<div class="t" style="left:673px;top:837px;letter-spacing:0.000px">THS</div>
<div class="t" style="left:715px;top:837px;letter-spacing:-0.124px">TPWS</div>
<div class="t" style="left:767px;top:837px;letter-spacing:0.260px">Total Power</div>
<div class="t" style="left:850px;top:837px;letter-spacing:0.188px">Failed Routes</div>
<div class="t" style="left:945px;top:837px;letter-spacing:0.164px">LUT</div>
<div class="t" style="left:986px;top:837px;letter-spacing:-0.072px">FF</div>
<div class="t" style="left:1018px;top:837px;letter-spacing:-0.343px">BRAMs</div>
<div class="t" style="left:1076px;top:837px;letter-spacing:-0.448px">URAM</div>
<div class="t" style="left:1128px;top:837px;letter-spacing:0.156px">DSP</div>
<div class="t" style="left:1171px;top:837px;letter-spacing:-0.011px">Start</div>
<div class="t" style="left:1214px;top:837px;letter-spacing:0.487px">Elapsed</div>
<div class="t" style="left:1278px;top:837px;letter-spacing:0.023px">Run Strategy</div>
<div class="t" style="left:1638px;top:837px;letter-spacing:0.040px">Report Strategy</div>
<svg style="left:259.7px;top:862.6999999999999px" width="9" height="5.2" viewBox="0 0 9 5.2"><path d="M0.6 0.6L4.5 4.4L8.4 0.6" fill="none" stroke="#555" stroke-width="1.25"/></svg>
<svg style="left:278px;top:859px" width="10" height="12" viewBox="0 0 10 12"><path d="M0.7 0.9L8.7 6L0.7 11.1Z" fill="none" stroke="#a4a4a4" stroke-width="1"/></svg>
<div class="t" style="left:295px;top:859px;letter-spacing:0.095px">synth_1</div>
<div class="t" style="left:369px;top:859px;letter-spacing:0.371px">constrs_1</div>
<div class="t" style="left:451px;top:859px;letter-spacing:0.130px">Not started</div>
<svg style="left:294px;top:882px" width="10" height="12" viewBox="0 0 10 12"><path d="M0.7 0.9L8.7 6L0.7 11.1Z" fill="none" stroke="#a4a4a4" stroke-width="1"/></svg>
<div class="t" style="left:311px;top:882px;letter-spacing:0.528px">impl_1</div>
<div class="t" style="left:369px;top:882px;letter-spacing:0.371px">constrs_1</div>
<div class="t" style="left:451px;top:882px;letter-spacing:0.130px">Not started</div>
<div class="t" style="left:1278px;top:859px;letter-spacing:0.106px">Vivado Synthesis Defaults (Vivado Synthesis 2019)</div>
<div class="t" style="left:1278px;top:882px;letter-spacing:0.151px">Vivado Implementation Defaults (Vivado Implementation 2019)</div>
<div class="a" style="left:1638px;top:856px;width:269px;height:44px;overflow:hidden">
<div class="t" style="left:0px;top:3px;letter-spacing:-0.016px">Vivado Synthesis Default Reports (Vivado Synthesis 2019)</div>
<div class="t" style="left:0px;top:26px;letter-spacing:0.065px">Vivado Implementation Default Reports (Vivado Implementation 2019)</div>
</div>
<div class="a" style="left:254px;top:1010px;width:1653px;height:1px;background:#e6e6e6"></div>
<div class="a" style="left:254px;top:1011px;width:1653px;height:12px;background:#fafafa"></div>
<svg style="left:259.0px;top:1013.0px" width="6" height="10" viewBox="0 0 6 10"><path d="M5.4 0.6L0.8 5.0L5.4 9.4" fill="none" stroke="#6b6b6b" stroke-width="2"/></svg>
<svg style="left:1897.5px;top:1013.0px" width="6" height="10" viewBox="0 0 6 10"><path d="M0.6 0.6L5.2 5.0L0.6 9.4" fill="none" stroke="#6b6b6b" stroke-width="2"/></svg>
<div class="a" style="left:271px;top:1013px;width:1271px;height:8px;border-radius:4px;background:#c1c1c1"></div>
</body>
</html>
